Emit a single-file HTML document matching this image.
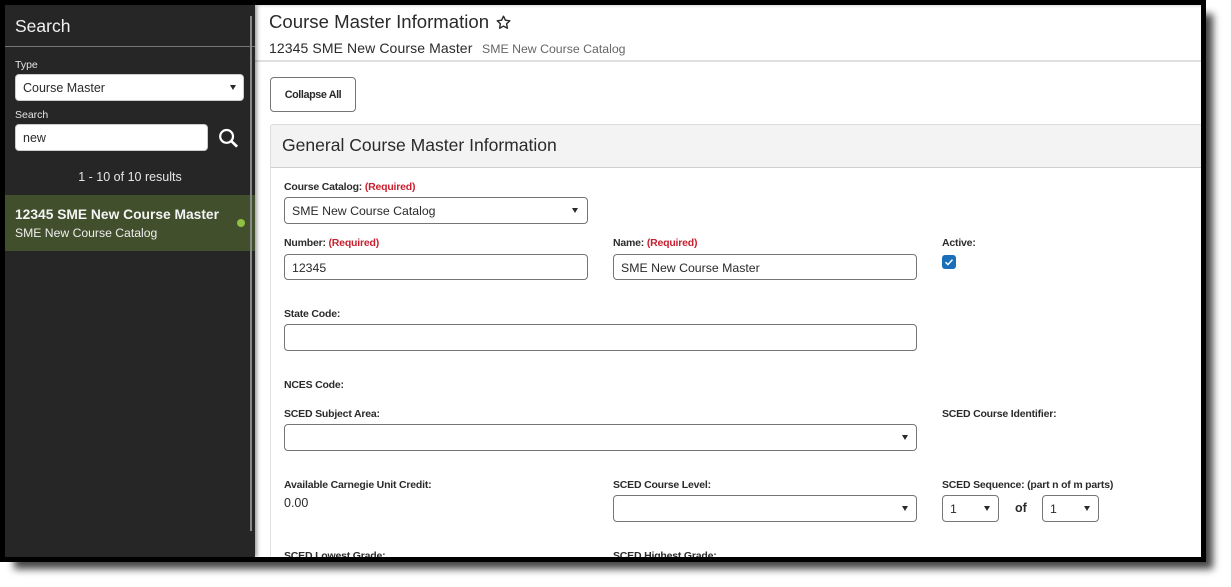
<!DOCTYPE html>
<html><head><meta charset="utf-8">
<style>
html,body{margin:0;padding:0;background:#fff;}
body{width:1231px;height:587px;position:relative;overflow:hidden;font-family:"Liberation Sans",sans-serif;color:#2a2a2a;}
.a{position:absolute;white-space:nowrap;}
.sh{position:absolute;left:14px;top:14px;width:1199px;height:555px;background:#444;filter:blur(4px);}
.frame{position:absolute;left:0;top:0;width:1206px;height:562px;background:#000;}
.page{position:absolute;left:5px;top:5px;width:1196px;height:552px;background:#fff;overflow:hidden;}
.side{position:absolute;left:5px;top:5px;width:250px;height:552px;background:#262626;box-shadow:2px 0 4px rgba(0,0,0,.4);}
.lab{font-size:10.5px;font-weight:bold;color:#2b2b2b;line-height:12px;letter-spacing:-.2px;}
.req{color:#c8202f;}
.box{position:absolute;box-sizing:border-box;background:#fff;border:1px solid #767676;border-radius:4px;font-size:12.3px;line-height:27px;padding-left:7px;color:#2a2a2a;white-space:nowrap;}
.arr{position:absolute;width:0;height:0;border-left:3.5px solid transparent;border-right:3.5px solid transparent;border-top:5px solid #2a2a2a;}
</style></head><body>
<div class="sh"></div>
<div class="frame"></div>
<div class="page"></div>
<div class="a" style="left:255px;top:5px;width:946px;height:3px;background:linear-gradient(#e4e4e4,#fff);"></div>
<div class="a" style="left:255px;top:60px;width:946px;height:2px;background:#e0e0e0;"></div>

<div class="a" style="left:269px;top:11px;font-size:18.6px;line-height:22px;">Course Master Information</div>
<svg class="a" style="left:495px;top:14px;" width="17" height="17" viewBox="0 0 17 17"><path d="M8.5 2.2l1.9 4 4.4.6-3.2 3 .8 4.4-3.9-2.1-3.9 2.1.8-4.4-3.2-3 4.4-.6z" fill="none" stroke="#2a2a2a" stroke-width="1.4" stroke-linejoin="round"/></svg>
<div class="a" style="left:269px;top:40px;font-size:14px;line-height:17px;letter-spacing:.1px;">12345 SME New Course Master</div>
<div class="a" style="left:482px;top:41px;font-size:12.3px;line-height:16px;color:#666;">SME New Course Catalog</div>

<div class="a" style="box-sizing:border-box;left:270px;top:77px;width:86px;height:35px;border:1px solid #767676;border-radius:4px;background:#fff;font-size:10.8px;font-weight:bold;letter-spacing:-.4px;line-height:35px;text-align:center;color:#2a2a2a;">Collapse All</div>

<div class="a" style="box-sizing:border-box;left:270px;top:124px;width:931px;height:44px;background:#f3f3f3;border:1px solid #dcdcdc;border-right:0;border-bottom:1px solid #cfcfcf;border-radius:3px 0 0 0;"></div>
<div class="a" style="left:270px;top:168px;width:1px;height:389px;background:#e2e2e2;"></div>
<div class="a" style="left:282px;top:134px;font-size:17.55px;line-height:22px;">General Course Master Information</div>

<div class="a lab" style="left:284px;top:181px;">Course Catalog: <span class="req">(Required)</span></div>
<div class="box" style="left:284px;top:197px;width:304px;height:27px;">SME New Course Catalog</div><div class="arr" style="left:572px;top:208px;"></div>

<div class="a lab" style="left:284px;top:237px;">Number: <span class="req">(Required)</span></div>
<div class="box" style="left:284px;top:254px;width:304px;height:26px;">12345</div>
<div class="a lab" style="left:613px;top:237px;">Name: <span class="req">(Required)</span></div>
<div class="box" style="left:613px;top:254px;width:304px;height:26px;">SME New Course Master</div>
<div class="a lab" style="left:942px;top:237px;">Active:</div>
<div class="a" style="left:942px;top:255px;width:14px;height:14px;background:#1a6fb8;border-radius:3px;"></div>
<svg class="a" style="left:942px;top:255px;" width="14" height="14" viewBox="0 0 14 14"><path d="M3.5 7.2l2.4 2.4 4.6-5" fill="none" stroke="#fff" stroke-width="1.5"/></svg>

<div class="a lab" style="left:284px;top:308px;">State Code:</div>
<div class="box" style="left:284px;top:324px;width:633px;height:27px;"></div>

<div class="a lab" style="left:284px;top:379px;">NCES Code:</div>

<div class="a lab" style="left:284px;top:408px;">SCED Subject Area:</div>
<div class="box" style="left:284px;top:424px;width:633px;height:27px;"></div><div class="arr" style="left:902px;top:435px;"></div>
<div class="a lab" style="left:942px;top:408px;">SCED Course Identifier:</div>

<div class="a lab" style="left:284px;top:479px;">Available Carnegie Unit Credit:</div>
<div class="a" style="left:284px;top:496px;font-size:12.5px;line-height:15px;">0.00</div>
<div class="a lab" style="left:613px;top:479px;">SCED Course Level:</div>
<div class="box" style="left:613px;top:495px;width:304px;height:27px;"></div><div class="arr" style="left:902px;top:506px;"></div>
<div class="a lab" style="left:942px;top:479px;">SCED Sequence: (part n of m parts)</div>
<div class="box" style="left:942px;top:495px;width:57px;height:27px;">1</div><div class="arr" style="left:984px;top:506px;"></div>
<div class="a" style="left:1015px;top:501px;font-size:12.5px;font-weight:bold;line-height:15px;">of</div>
<div class="box" style="left:1042px;top:495px;width:57px;height:27px;">1</div><div class="arr" style="left:1084px;top:506px;"></div>

<div class="a lab" style="left:284px;top:550px;">SCED Lowest Grade:</div>
<div class="a lab" style="left:613px;top:550px;">SCED Highest Grade:</div>

<div class="side"></div>
<div class="a" style="left:15px;top:15px;font-size:17.5px;line-height:22px;color:#f2f2f2;">Search</div>
<div class="a" style="left:5px;top:46px;width:250px;height:1px;background:#777;"></div>
<div class="a" style="left:250px;top:16px;width:2px;height:515px;background:#8a8a8a;"></div>
<div class="a" style="left:15px;top:59px;font-size:10.5px;line-height:13px;color:#e6e6e6;">Type</div>
<div class="box" style="left:15px;top:74px;width:229px;height:27px;border-color:#ccc;font-size:12.5px;">Course Master</div><div class="arr" style="left:230px;top:85px;"></div>
<div class="a" style="left:15px;top:109px;font-size:10.5px;line-height:13px;color:#e6e6e6;">Search</div>
<div class="box" style="left:15px;top:124px;width:193px;height:27px;border-color:#ccc;font-size:12.5px;">new</div>
<svg class="a" style="left:218px;top:128px;" width="21" height="20" viewBox="0 0 21 20"><circle cx="8.6" cy="8.4" r="6.4" fill="none" stroke="#fff" stroke-width="2.2"/><path d="M13.4 13.2l5.7 5.4" stroke="#fff" stroke-width="2.7"/></svg>
<div class="a" style="left:5px;top:170px;width:250px;text-align:center;font-size:12.5px;line-height:15px;color:#e6e6e6;">1 - 10 of 10 results</div>
<div class="a" style="left:5px;top:195px;width:250px;height:56px;background:#414f2d;"></div>
<div class="a" style="left:250px;top:195px;width:2px;height:56px;background:#8a8a8a;"></div>
<div class="a" style="left:15px;top:207px;font-size:13.8px;font-weight:bold;line-height:16px;color:#f4f4f4;">12345 SME New Course Master</div>
<div class="a" style="left:15px;top:226px;font-size:12.2px;line-height:15px;color:#eee;">SME New Course Catalog</div>
<div class="a" style="left:237px;top:219px;width:8px;height:8px;border-radius:50%;background:#8fc03f;"></div>
<div class="a" style="left:0;top:557px;width:1206px;height:5px;background:#000;"></div>
</body></html>
